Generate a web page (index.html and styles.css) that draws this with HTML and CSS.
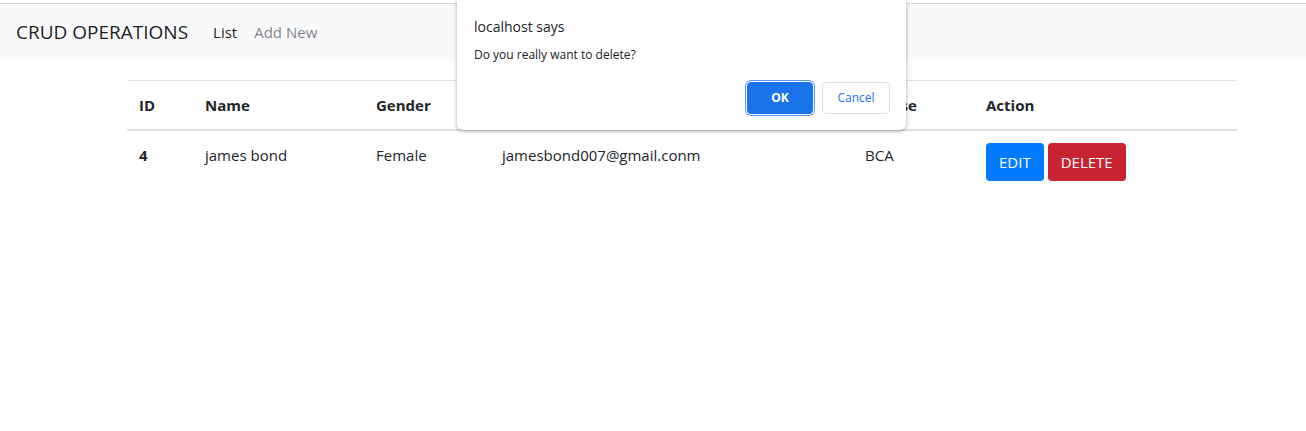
FILE: index.html
```html
<!DOCTYPE html>
<html>
<head>
<meta charset="utf-8">
<link rel="stylesheet" href="styles.css">
</head>
<body>
<div class="topline"></div>
<nav class="navbar">
  <span class="brand">CRUD OPERATIONS</span>
  <a class="nav-link active">List</a>
  <a class="nav-link">Add New</a>
</nav>
<main class="container">
  <table class="table">
    <thead>
      <tr>
        <th class="c-id">ID</th>
        <th class="c-name">Name</th>
        <th class="c-gender">Gender</th>
        <th class="c-email">Email</th>
        <th class="c-course">Course</th>
        <th class="c-action">Action</th>
      </tr>
    </thead>
    <tbody>
      <tr>
        <th class="c-id">4</th>
        <td>james bond</td>
        <td>Female</td>
        <td>jamesbond007@gmail.conm</td>
        <td>BCA</td>
        <td class="actions"><button class="btn btn-primary">EDIT</button><button class="btn btn-danger">DELETE</button></td>
      </tr>
    </tbody>
  </table>
</main>
<div class="dialog">
  <div class="dlg-title">localhost says</div>
  <div class="dlg-msg">Do you really want to delete?</div>
  <div class="dlg-buttons">
    <button class="dlg-ok">OK</button>
    <button class="dlg-cancel">Cancel</button>
  </div>
</div>
</body>
</html>
```

FILE: styles.css
```css
* { box-sizing: border-box; }
html, body { margin: 0; padding: 0; }
body {
  font-family: "Segoe UI", "Open Sans", "Noto Sans", sans-serif;
  font-size: 15px;
  color: #212529;
  background: #fff;
  padding-top: 3px;
  position: relative;
}
.topline { height: 1px; background: #d6d6d6; }
.navbar {
  height: 56px;
  background: #f8f9fa;
  display: flex;
  align-items: center;
  padding: 0 16px;
}
.brand {
  font-size: 19px;
  color: rgba(0,0,0,.9);
  margin-right: 25px;
}
.nav-link {
  font-size: 15px;
  color: rgba(0,0,0,.5);
  margin-right: 17px;
}
.nav-link.active { color: rgba(0,0,0,.9); }
.container {
  margin-left: 127px;
  width: 1110px;
  padding-top: 20px;
}
.table { width: 100%; border-collapse: collapse; }
.table th, .table td {
  text-align: left;
  padding: 12px;
  line-height: 24px;
  vertical-align: top;
}
.table thead th {
  border-top: 1px solid #dee2e6;
  border-bottom: 2px solid #dee2e6;
  font-weight: 700;
}
.c-id { width: 66px; }
.c-name { width: 171px; }
.c-gender { width: 126px; }
.c-email { width: 363px; }
.c-course { width: 121px; }
.actions { display: flex; gap: 4px; }
.btn {
  font-family: inherit;
  font-size: 15px;
  line-height: 24px;
  border: 1px solid transparent;
  border-radius: 4px;
  color: #fff;
  height: 38px;
  padding: 0 12px;
}
.btn-primary { background: #007bff; }
.btn-danger { background: #c82333; }
.dialog {
  position: absolute;
  left: 457px;
  top: 0;
  width: 449px;
  height: 130px;
  background: #fff;
  border-radius: 0 0 6px 6px;
  box-shadow: 0 1px 4px rgba(0,0,0,.35);
  padding: 17px 16px 0 17px;
}
.dlg-title { font-size: 14px; color: #202124; line-height: 20px; }
.dlg-msg { font-size: 12px; color: #202124; margin-top: 10px; line-height: 16px; }
.dlg-buttons {
  display: flex;
  justify-content: flex-end;
  gap: 9px;
  margin-top: 19px;
}
.dlg-buttons button {
  font-family: inherit;
  font-size: 12px;
  height: 32px;
  border-radius: 4px;
  padding: 0;
  line-height: 28px;
}
.dlg-ok {
  width: 66px;
  background: #1a73e8;
  color: #fff;
  font-weight: 700;
  border: 1px solid #1a73e8;
  box-shadow: 0 0 0 1px #fff, 0 0 0 2px #5b9af0;
}
.dlg-cancel {
  width: 68px;
  background: #fff;
  color: #1a73e8;
  border: 1px solid #dadce0;
}
```
